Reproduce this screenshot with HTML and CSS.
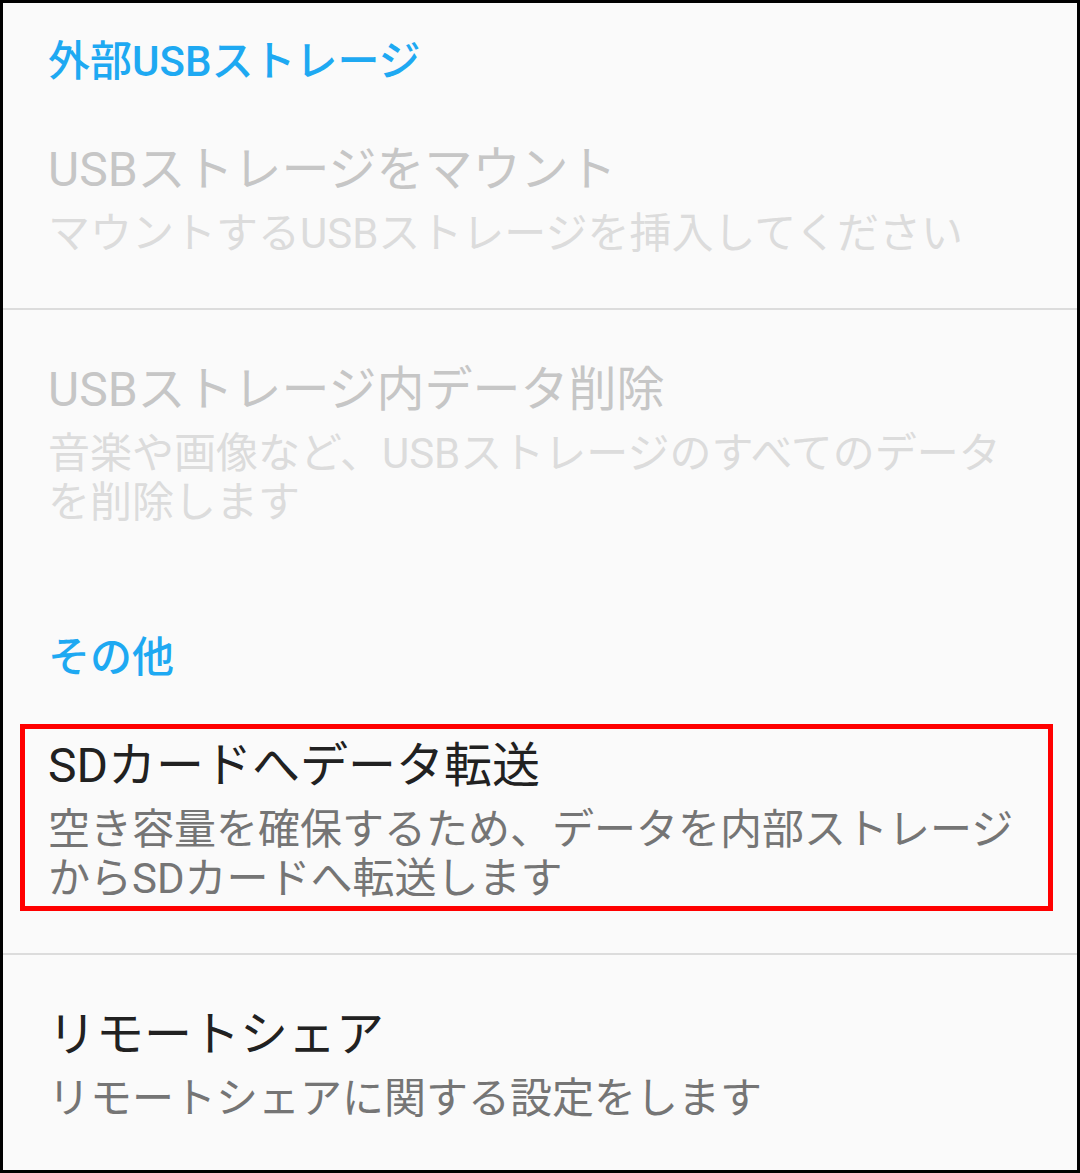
FILE: index.html
```html
<!DOCTYPE html>
<html lang="ja">
<head>
<meta charset="utf-8">
<link rel="stylesheet" href="styles.css">
</head>
<body>
<div class="frame">
  <div class="cat cat-first">外部USBストレージ</div>
  <div class="item disabled">
    <div class="title">USBストレージをマウント</div>
    <div class="sub">マウントするUSBストレージを挿入してください</div>
  </div>
  <div class="divider"></div>
  <div class="item disabled">
    <div class="title">USBストレージ内データ削除</div>
    <div class="sub">音楽や画像など、USBストレージのすべてのデータを削除します</div>
  </div>
  <div class="cat">その他</div>
  <div class="item marked">
    <div class="title">SDカードへデータ転送</div>
    <div class="sub">空き容量を確保するため、データを内部ストレージからSDカードへ転送します</div>
    <div class="mark"></div>
  </div>
  <div class="divider"></div>
  <div class="item">
    <div class="title">リモートシェア</div>
    <div class="sub">リモートシェアに関する設定をします</div>
  </div>
</div>
</body>
</html>
```
FILE: styles.css
```css
html, body {
  margin: 0;
  padding: 0;
  background: #000;
}
.frame {
  box-sizing: border-box;
  width: 1080px;
  height: 1173px;
  border: 3px solid #000;
  background: #fafafa;
  overflow: hidden;
  font-family: Roboto, "Noto Sans CJK JP", sans-serif;
}
.cat {
  padding: 56px 45px 3px;
  font-size: 42px;
  line-height: 50px;
  font-weight: 500;
  color: #1ea9f2;
}
.cat-first {
  padding-top: 34px;
}
.item {
  position: relative;
  padding: 52px 47px 50px 45px;
}
.title {
  font-size: 48px;
  line-height: 56px;
  color: #212121;
  margin-bottom: 11px;
}
.sub {
  font-size: 42px;
  line-height: 49px;
  color: #757575;
}
.disabled .title {
  color: #c6c6c6;
}
.disabled .sub {
  color: #dcdcdc;
}
.divider {
  height: 2px;
  background: #dcdcdc;
}
.mark {
  position: absolute;
  left: 17px;
  top: 38px;
  width: 1033px;
  height: 187px;
  box-sizing: border-box;
  border: 5px solid #ff0000;
}
```
